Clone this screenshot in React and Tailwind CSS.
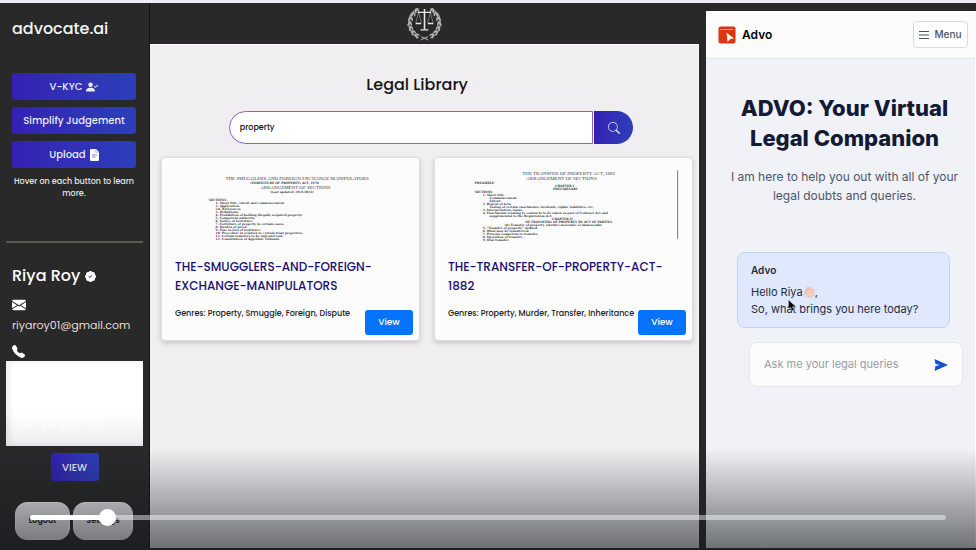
import React from "react";
import { BsPersonCheckFill, BsPatchCheckFill, BsEnvelopeFill, BsTelephoneFill, BsSearch } from "react-icons/bs";

const gradient = "bg-linear-to-r from-[#3420b4] to-[#2c3fba]";

// Each preview line: x, baseline, text, heading flag.
const smugglersPage = [
  [64, 10, "THE SMUGGLERS AND FOREIGN EXCHANGE MANIPULATORS", true],
  [89, 14, "(FORFEITURE OF PROPERTY) ACT, 1976"],
  [99, 19, "ARRANGEMENT OF SECTIONS", true],
  [109, 23, "(Last updated: 20-9-2021)"],
  [47, 31, "SECTIONS"],
  [54, 34, "1.  Short title, extent and commencement."],
  [54, 37, "2.  Application."],
  [54, 40, "2A. References."],
  [54, 43, "3.  Definitions."],
  [54, 46, "4.  Prohibition of holding illegally acquired property."],
  [54, 49, "5.  Competent authority."],
  [54, 52, "6.  Notice of forfeiture."],
  [54, 55, "7.  Forfeiture of property in certain cases."],
  [54, 58, "8.  Burden of proof."],
  [54, 61, "9.  Fine in lieu of forfeiture."],
  [54, 64, "10. Procedure in relation to certain trust properties."],
  [54, 67, "11. Certain transfers to be null and void."],
  [54, 70, "12. Constitution of Appellate Tribunal."],
];

const transferPage = [
  [88, 5, "THE TRANSFER OF PROPERTY ACT, 1882", true],
  [92, 10, "ARRANGEMENT OF SECTIONS", true],
  [40, 14, "PREAMBLE"],
  [121, 17, "CHAPTER I"],
  [119, 20, "PRELIMINARY"],
  [40, 23, "SECTIONS"],
  [48, 26, "1.   Short title."],
  [55, 29, "Commencement."],
  [55, 32, "Extent."],
  [48, 35, "2.   Repeal of Acts."],
  [55, 38, "Saving of certain enactments, incidents, rights, liabilities, etc."],
  [48, 41, "3.   Interpretation clause."],
  [48, 44, "4.   Enactments relating to contracts to be taken as part of Contract Act and"],
  [55, 47, "supplemental to the Registration Act."],
  [118, 50, "CHAPTER II"],
  [91, 53, "OF TRANSFERS OF PROPERTY BY ACT OF PARTIES"],
  [70, 56, "(A) Transfer of property, whether moveable or immoveable"],
  [48, 59, "5.   “Transfer of property” defined."],
  [48, 62, "6.   What may be transferred."],
  [48, 65, "7.   Persons competent to transfer."],
  [48, 68, "8.   Operation of transfer."],
  [48, 71, "9.   Oral transfer."],
];

const books = [
  {
    title: "THE-SMUGGLERS-AND-FOREIGN-EXCHANGE-MANIPULATORS",
    lines: ["THE-SMUGGLERS-AND-FOREIGN-", "EXCHANGE-MANIPULATORS"],
    genres: "Property, Smuggle, Foreign, Dispute",
    page: smugglersPage,
    edge: false,
  },
  {
    title: "THE-TRANSFER-OF-PROPERTY-ACT-1882",
    lines: ["THE-TRANSFER-OF-PROPERTY-ACT-", "1882"],
    genres: "Property, Murder, Transfer, Inheritance",
    page: transferPage,
    edge: true,
  },
];

function Emblem() {
  const leaves = [
    [9, 5, -25], [5.5, 8.5, 0], [3, 13, 10], [2, 18, 0], [3, 23, -15], [5.5, 27.5, -35], [9.5, 31, -50],
  ];
  const half = (
    <g>
      <path d="M12 2.500C4.500 5 1.500 11 1.700 18c.2 6.500 4 12 10.300 15" fill="none" stroke="#a8a8aa" strokeWidth="1.200" />
      {leaves.map(([x, y, r]) => (
        <g key={y} transform={`translate(${x} ${y}) rotate(${r})`}>
          <ellipse rx="1" ry="2.800" transform="rotate(28)" />
          <ellipse cx="2" cy="0.600" rx="0.900" ry="2.400" transform="rotate(-18)" />
        </g>
      ))}
    </g>
  );
  return (
    <svg viewBox="0 0 36 36" className="h-[35px] w-[35px]" fill="#b4b4b6" aria-hidden="true">
      {half}
      <g transform="translate(36 0) scale(-1 1)">{half}</g>
      <path d="M14 35l7.500-3.500M22 35l-7.500-3.500" stroke="#b9b9bb" strokeWidth="1" />
      <g stroke="#e8e8e8" fill="none">
        <path d="M18 3v21" strokeWidth="1.600" />
        <path d="M11 6.500h14M14 24.500h8" strokeWidth="1.300" />
        <path d="M12 7l-3 10.500M12 7l3 10.500M24 7l-3 10.500M24 7l3 10.500" strokeWidth="0.400" />
        <path d="M9 18h5.500M21.500 18H27" strokeWidth="1.400" />
      </g>
    </svg>
  );
}

function FileIcon() {
  return (
    <svg viewBox="0 0 9 12" className="h-3 w-[9px]" aria-hidden="true">
      <path d="M1.200 0H6l3 3v7.800c0 .7-.5 1.200-1.200 1.200H1.200C.5 12 0 11.500 0 10.800V1.200C0 .5.5 0 1.200 0z" fill="#fff" />
      <path d="M2 6h5M2 8h3.500" stroke="#6a66c8" strokeWidth=".8" />
      <path d="M5.800.5v2.700h2.700" fill="none" stroke="#8a86d8" strokeWidth=".6" />
    </svg>
  );
}

function PagePreview({ page, edge }) {
  return (
    <svg viewBox="0 0 259 74" className="h-[74px] w-full" fill="#3a3a3a" aria-hidden="true">
      {page.map(([x, y, text, heading]) => (
        <text
          key={y}
          x={x}
          y={y}
          className={heading ? "font-['Liberation_Serif',serif] text-[5px]" : "font-['DejaVu_Serif',serif] text-[3px] font-bold"}
        >
          {text}
        </text>
      ))}
      {edge && <path d="M244.500 0v69" stroke="#777" strokeWidth="1" />}
    </svg>
  );
}

function BookCard({ book }) {
  return (
    <article className="flex min-h-[184px] min-w-0 flex-col rounded-[4px] border border-[#dedee2] bg-[#fcfcfd] pt-3 shadow-[0_2px_5px_rgba(0,0,0,0.18)]">
      <PagePreview page={book.page} edge={book.edge} />
      <h2 className="mt-[13px] px-[13px] text-[12px] leading-[19px] font-medium text-[#1b1070]" aria-label={book.title}>
        {book.lines.map((line) => (
          <span key={line} className="block whitespace-nowrap">{line}</span>
        ))}
      </h2>
      <div className="mt-3 flex items-start justify-between pr-[6px] pl-[13px]">
        <p className="text-[8px] leading-[14px] font-medium whitespace-nowrap text-[#222]">Genres: {book.genres}</p>
        <button className="mt-[3px] h-[25px] w-12 shrink-0 rounded-[3px] bg-[#0573fb] text-[9px] font-medium text-white">View</button>
      </div>
    </article>
  );
}

function Sidebar() {
  const action = `flex h-[27px] items-center justify-center gap-1 rounded-[3px] text-[10px] font-medium text-[#ececf8] ${gradient}`;
  return (
    <aside className="flex w-[150px] shrink-0 flex-col border-r border-[#111] text-white">
      <div className="pr-[13px] pl-3">
        <p className="mt-[14px] text-[16px] leading-6 font-medium text-[#f4f4f4]">advocate.ai</p>
        <div className="mt-8 flex flex-col gap-[7px]">
          <button className={action}>V-KYC <BsPersonCheckFill size={12} /></button>
          <button className={action}>Simplify Judgement</button>
          <button className={action}>Upload <FileIcon /></button>
        </div>
        <p className="-mx-1 mt-2 text-center text-[8px] leading-3 font-medium text-[#e4e4e4]">Hover on each button to learn more.</p>
      </div>
      <hr className="mx-[6px] mt-[41px] border-t-2 border-[#5a5853]" />
      <div className="pr-[13px] pl-3">
        <h2 className="mt-[21px] flex items-center gap-[5px] text-[16px] leading-6 font-medium">Riya Roy <BsPatchCheckFill size={11} /></h2>
        <BsEnvelopeFill size={14} className="mt-[10px]" />
        <a href="mailto:riyaroy01@gmail.com" className="mt-[5px] block text-[11px] leading-4 text-[#e3dcd6]">riyaroy01@gmail.com</a>
        <BsTelephoneFill size={13} className="mt-3" />
      </div>
      <div className="mx-[6px] mt-[3px] flex h-[85px] flex-col justify-end bg-linear-to-b from-white from-60% to-[#ececee] pb-3 pl-2 shadow-[inset_3px_0_6px_rgba(0,0,0,0.08)]">
        <p className="text-[10px] leading-4 text-[#fdfdfd]">West Bengal, India</p>
      </div>
      <button className={`mx-auto mt-[7px] h-7 w-12 rounded-[3px] text-[10px] font-medium text-[#ececf8] ${gradient}`}>VIEW</button>
      <div className="mt-auto mb-2 flex gap-[3px] pl-[15px] text-[8px] font-semibold text-[#222]">
        <button className="h-[38px] w-[55px] rounded-[12px] border border-white bg-[#efeff1]">Logout</button>
        <button className="h-[38px] w-[60px] rounded-[12px] border border-white bg-[#efeff1]">Settings</button>
      </div>
    </aside>
  );
}

function Library() {
  return (
    <main className="flex min-w-0 flex-1 flex-col">
      <header className="flex h-[41px] items-center justify-center">
        <Emblem />
      </header>
      <section className="flex-1 border border-[#f8f8fa] bg-[#f0eef1] pr-[5px] pl-[10px]">
        <h1 className="mt-[26px] pr-5 text-center text-[16px] leading-7 font-medium text-[#151515]">Legal Library</h1>
        <form className="mx-auto mt-3 box-content flex h-[33px] w-[76%] pl-2" onSubmit={(e) => e.preventDefault()}>
          <input aria-label="Search the library" defaultValue="property" className="min-w-0 flex-1 rounded-l-full border border-[#8a62b8] bg-white px-[10px] text-[8px] font-medium text-[#111] outline-none" />
          <button aria-label="Search" className={`ml-px flex w-[39px] items-center justify-center rounded-r-full text-[#ddd8f5] ${gradient}`}>
            <BsSearch size={12} />
          </button>
        </form>
        <div className="mt-[13px] grid grid-cols-2 gap-[14px]">
          {books.map((book) => <BookCard key={book.title} book={book} />)}
        </div>
      </section>
    </main>
  );
}

function Wave() {
  return (
    <svg viewBox="0 0 12 12" className="inline-block h-3 w-3 align-[-2px]" aria-label="waving hand">
      <path d="M2 4.200l1-.9 2 1.700-1.700-3 .9-.8 2.600 3-1.200-2.700 1-.6 2.500 3.800.4-1.900 1.200.2.300 4c0 2.500-2 4.300-4.300 4.100C4 10.800 1.900 8.500 1.200 6.900l.7-.7 1.600 1.200z" fill="#f7cfb9" stroke="#e5a98c" strokeWidth=".5" />
      <path d="M.5 8.500c.2 1.200.9 2 2 2.500" fill="none" stroke="#c99" strokeWidth=".5" />
    </svg>
  );
}

function Chat() {
  return (
    <aside className="mt-2 flex w-[270px] shrink-0 flex-col border-r border-white bg-[#f0f2f8] font-[Inter,sans-serif]">
      <header className="flex h-12 items-center border-b border-[#e4e5ea] bg-[#fcfcfd] pr-[7px] pl-3">
        <svg viewBox="0 0 18 18" className="h-[18px] w-[18px]" aria-hidden="true">
          <rect x=".5" y=".5" width="17" height="17" rx="2" fill="#dc3510" />
          <path d="M2 3.500h1.500M4.500 3.500H15" stroke="#ff9d87" strokeWidth="1.200" />
          <path d="M8.500 6.500l7.500 6-3.500.5-3 3z" fill="#fff4ef" />
        </svg>
        <span className="ml-[6px] text-[12px] font-semibold text-black">Advo</span>
        <button className="ml-auto flex h-[27px] w-[55px] items-center justify-center gap-[5px] rounded-[4px] border border-[#d8dae2] bg-white text-[10px] font-medium text-[#4a5167]">
          <svg viewBox="0 0 10 10" className="h-[10px] w-[10px]" stroke="currentColor" strokeWidth="1" aria-hidden="true">
            <path d="M0 1.500h10M0 5h10M0 8.500h10" />
          </svg>
          Menu
        </button>
      </header>
      <h1 className="mt-[34px] px-4 pl-6 text-center text-[22px] leading-[30px] font-extrabold text-[#141a34]">ADVO: Your Virtual Legal Companion</h1>
      <p className="mt-[14px] px-3 pl-5 text-center text-[12px] leading-[19px] text-[#4d566b]">I am here to help you out with all of your legal doubts and queries.</p>
      <div className="relative mt-[47px] mr-[25px] ml-[31px] rounded-[8px] border border-[#c3d3ee] bg-[#e0e8fd] px-[13px] py-[9px] text-[11px] leading-[17px] text-[#1f2a44]">
        <p className="text-[10px] leading-4 font-semibold">Advo</p>
        <p className="mt-[6px]">Hello Riya<Wave />,</p>
        <p>So, what brings you here today?</p>
        <svg viewBox="0 0 9 14" className="absolute top-[46px] left-[50px] h-[13px] w-2" aria-hidden="true">
          <path d="M.5.5v10.500l2.500-2 1.800 4 2-.9L5 8.300h3.500z" fill="#000" stroke="#fff" strokeWidth=".4" />
        </svg>
      </div>
      <form className="mt-[14px] mr-3 ml-[43px] flex h-[45px] items-center rounded-[8px] border border-[#e6e7ed] bg-[#fcfcfd] px-[14px]" onSubmit={(e) => e.preventDefault()}>
        <input aria-label="Legal query" placeholder="Ask me your legal queries" className="min-w-0 flex-1 bg-transparent text-[11px] text-[#333] outline-none placeholder:text-[#999ca3]" />
        <button aria-label="Send">
          <svg viewBox="0 0 14 12" className="h-3 w-[14px]" aria-hidden="true">
            <path d="M.5 0L14 6 .5 12 1.500 7 6 6 1.500 5z" fill="#164fd0" />
          </svg>
        </button>
      </form>
    </aside>
  );
}

export default function App() {
  return (
    <div className="relative flex h-screen min-h-[550px] flex-col overflow-hidden border-t-[3px] border-[#ededf3] bg-[#29292a] font-[Poppins,Inter,sans-serif]">
      <div className="flex min-h-0 flex-1 pb-[2px]">
        <Sidebar />
        <Library />
        <div className="w-[7px] shrink-0" />
        <Chat />
      </div>
      <div className="pointer-events-none absolute inset-x-0 bottom-0 h-[102px] bg-linear-to-b from-[#14181c]/0 to-[#14181c]/60" />
      <div className="absolute inset-x-[30px] bottom-[30px] flex h-[5px]">
        <input
          type="range"
          aria-label="Playback position"
          min="0"
          max="1000"
          defaultValue="77"
          className="h-[5px] w-full appearance-none rounded-full bg-[linear-gradient(to_right,#fff_8.5%,rgba(255,255,255,0.45)_8.5%)] [&::-webkit-slider-thumb]:h-[17px] [&::-webkit-slider-thumb]:w-[17px] [&::-webkit-slider-thumb]:appearance-none [&::-webkit-slider-thumb]:rounded-full [&::-webkit-slider-thumb]:bg-white"
        />
      </div>
    </div>
  );
}
